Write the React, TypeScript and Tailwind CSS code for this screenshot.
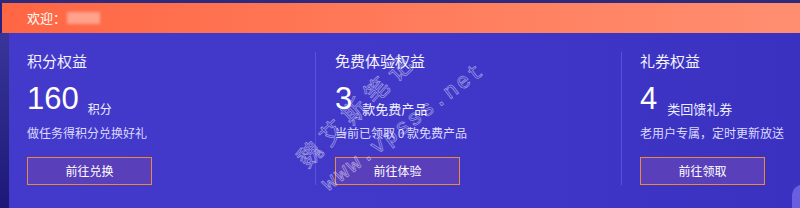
const cards = [
  {
    title: "积分权益",
    value: "160",
    unit: "积分",
    desc: "做任务得积分兑换好礼",
    action: "前往兑换",
  },
  {
    title: "免费体验权益",
    value: "3",
    unit: "款免费产品",
    desc: "当前已领取 0 款免费产品",
    action: "前往体验",
  },
  {
    title: "礼券权益",
    value: "4",
    unit: "类回馈礼券",
    desc: "老用户专属，定时更新放送",
    action: "前往领取",
  },
];

export default function App() {
  return (
    <div
      className="relative w-[800px] h-[208px] overflow-hidden bg-[#272184] flex flex-col"
      style={{ fontFamily: '"Liberation Sans", "Noto Sans CJK SC", sans-serif' }}
    >
      {/* top strip */}
      <div className="h-[3px] bg-[#2e2a7e]" />

      {/* welcome bar */}
      <div className="ml-[2px] h-[30px] flex items-center pl-[25px] bg-gradient-to-r from-[#ff6643] to-[#ff8e70]">
        <span className="text-[13px] text-white" style={{ fontFamily: '"Noto Sans CJK SC", sans-serif' }}>
          欢迎：
        </span>
        <div className="ml-[1px] w-[33px] h-[12px] bg-[#ffb9a8]/70 blur-[1.5px]" />
      </div>

      <div className="flex flex-1">
        <div className="w-[9px] bg-gradient-to-b from-[#3a3599] to-[#1d1877]" />
        <div
          className="flex-1 flex pt-[19px] bg-gradient-to-r from-[#4339cb] via-[#4138c9] to-[#3a31c1]"
          style={{ fontFamily: '"Noto Sans CJK SC", sans-serif' }}
        >
          {cards.map((c, i) => (
            <div
              key={c.title}
              className={
                i === 0
                  ? "w-[306px] h-[133px] pl-[18px] flex flex-col"
                  : i === 1
                  ? "w-[306px] h-[133px] pl-[19px] border-l border-[#5a52d6] flex flex-col"
                  : "flex-1 h-[133px] pl-[18px] border-l border-[#5a52d6] flex flex-col"
              }
            >
              <div className="text-[15px] leading-[18px] text-[#f4f3ff]">{c.title}</div>
              <div className="mt-[12px] flex items-end">
                <span
                  className="text-[31px] leading-[34px] text-white"
                  style={{ fontFamily: '"Liberation Sans", Arial, sans-serif' }}
                >
                  {c.value}
                </span>
                <span className={i === 0 ? "ml-[9px] text-[12px] leading-[14px] text-[#eeeeff]" : "ml-[10px] text-[13px] leading-[15px] text-[#eeeeff]"}>
                  {c.unit}
                </span>
              </div>
              <div className="mt-[9px] text-[12px] leading-[16px] text-[#dcdaff]">{c.desc}</div>
              <button className="mt-[16px] w-[125px] h-[28px] border border-[#e8893c] bg-[#5a3fbb] text-[12px] text-white">
                {c.action}
              </button>
            </div>
          ))}
        </div>
      </div>

      {/* corner decoration */}
      <div className="absolute right-[-16px] bottom-[-10px] w-[24px] h-[34px] rounded-full bg-[#6a5ee0]" />

      {/* watermark */}
      <div
        className="absolute left-[356px] top-[108px] -translate-x-1/2 -translate-y-1/2 rotate-[-44deg] whitespace-nowrap text-[24px] leading-none tracking-[7px] text-transparent [-webkit-text-stroke:0.7px_rgba(255,255,255,0.5)]"
        style={{ fontFamily: '"Noto Sans CJK SC", sans-serif' }}
      >
        魏艾斯笔记
      </div>
      <div
        className="absolute left-[404px] top-[128px] -translate-x-1/2 -translate-y-1/2 rotate-[-37deg] whitespace-nowrap text-[22px] leading-none tracking-[2px] text-transparent [-webkit-text-stroke:0.7px_rgba(255,255,255,0.5)]"
        style={{ fontFamily: '"Liberation Mono", monospace' }}
      >
        www.vpsss.net
      </div>
    </div>
  );
}
